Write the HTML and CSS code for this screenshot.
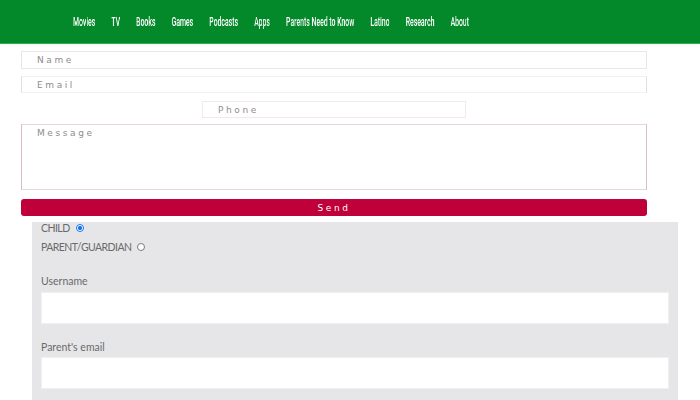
FILE: index.html
```html
<!DOCTYPE html>
<html lang="en">
<head>
<meta charset="utf-8">
<title>Contact</title>
<link rel="stylesheet" href="styles.css">
</head>
<body>
<nav class="topnav">
  <ul class="menu">
    <li><a href="#">Movies</a></li>
    <li><a href="#">TV</a></li>
    <li><a href="#">Books</a></li>
    <li><a href="#">Games</a></li>
    <li><a href="#">Podcasts</a></li>
    <li><a href="#">Apps</a></li>
    <li><a href="#">Parents Need to Know</a></li>
    <li><a href="#">Latino</a></li>
    <li><a href="#">Research</a></li>
    <li><a href="#">About</a></li>
  </ul>
</nav>
<form class="contact">
  <input class="field field-name" type="text" placeholder="Name">
  <input class="field field-email" type="email" placeholder="Email">
  <input class="field field-phone" type="tel" placeholder="Phone">
  <textarea class="field field-message" placeholder="Message"></textarea>
  <button class="send" type="button">Send</button>
</form>
<section class="signup">
  <div class="roles">
    <label class="role">CHILD <input class="radio" type="radio" name="role" checked></label>
    <label class="role">PARENT/GUARDIAN <input class="radio" type="radio" name="role"></label>
  </div>
  <label class="label label-user">Username</label>
  <input class="box" type="text">
  <label class="label label-email">Parent's email</label>
  <input class="box" type="email">
</section>
</body>
</html>
```
FILE: styles.css
```css
html, body {
  margin: 0;
  padding: 0;
  background: #ffffff;
}
body {
  font-family: "Lato", "Liberation Sans", sans-serif;
  overflow: hidden;
}
.topnav {
  height: 43px;
  background: #04892a;
  border-bottom: 1px solid #33a84f;
  display: flex;
  align-items: center;
  box-shadow: 0 1px 3px rgba(0,0,0,0.06);
}
.menu {
  list-style: none;
  margin: 0 0 0 73px;
  padding: 0;
  display: flex;
  gap: 29.3px;
  transform: scaleX(0.55) translateZ(0);
  transform-origin: left center;
  will-change: transform;
  white-space: nowrap;
}
.menu a {
  color: #ffffff;
  text-decoration: none;
  font-family: "Roboto", "Liberation Sans", sans-serif;
  font-size: 12.5px;
  font-weight: 500;
  line-height: 16px;
  display: block;
}
.contact {
  display: flex;
  flex-direction: column;
  margin: 7px 53px 0 21px;
}
.field {
  box-sizing: border-box;
  margin: 0;
  background: #ffffff;
  border: 1px solid #ece5e8;
  font-family: "DejaVu Sans", sans-serif;
  font-size: 9px;
  letter-spacing: 2.6px;
  color: #888;
  padding: 0 0 0 15px;
  outline: none;
}
.field::placeholder {
  color: #8f8c8e;
  letter-spacing: 2.6px;
}
.field-name {
  height: 18px;
}
.field-email {
  height: 17px;
  margin-top: 7px;
  border-color: #f4f0f2 #e6dde1;
}
.field-phone {
  height: 17px;
  width: 264px;
  margin: 8px auto 0;
  border-color: #f0eaed;
}
.field-message {
  height: 66px;
  margin-top: 6px;
  padding-top: 3px;
  resize: none;
  border-color: #e4d8dd #dcbcc8;
  font-family: "DejaVu Sans", sans-serif;
}
.send {
  height: 17px;
  margin-top: 9px;
  background: #c0003a;
  border: none;
  border-radius: 3px;
  color: #ffffff;
  font-family: "DejaVu Sans", sans-serif;
  font-size: 9px;
  letter-spacing: 2.6px;
  padding: 0;
}
.signup {
  margin: 6px 22px 0 32px;
  background: #e6e6e8;
  padding: 0 9px 20px;
  display: flex;
  flex-direction: column;
  color: #6a6a6a;
  font-size: 10.5px;
}
.roles {
  display: flex;
  flex-direction: column;
  gap: 7px;
}
.role {
  line-height: 12px;
  display: flex;
  align-items: center;
  letter-spacing: -0.55px;
}
.radio {
  appearance: none;
  -webkit-appearance: none;
  width: 8px;
  height: 8px;
  margin: 0 0 0 6px;
  border-radius: 50%;
  border: 1px solid #7a7a7a;
  background: #ffffff;
  box-sizing: border-box;
}
.radio:checked {
  border-color: #1a73e8;
  background: radial-gradient(circle, #1a73e8 0 2px, #ffffff 2.2px 100%);
}
.label {
  line-height: 12px;
}
.label-user {
  margin-top: 22px;
}
.label-email {
  margin-top: 17px;
}
.box {
  box-sizing: border-box;
  height: 32px;
  margin: 5px 0 0;
  background: #ffffff;
  border: 1px solid #f0f0f0;
  outline: none;
}
.label-email + .box {
  margin-top: 4px;
}
```
